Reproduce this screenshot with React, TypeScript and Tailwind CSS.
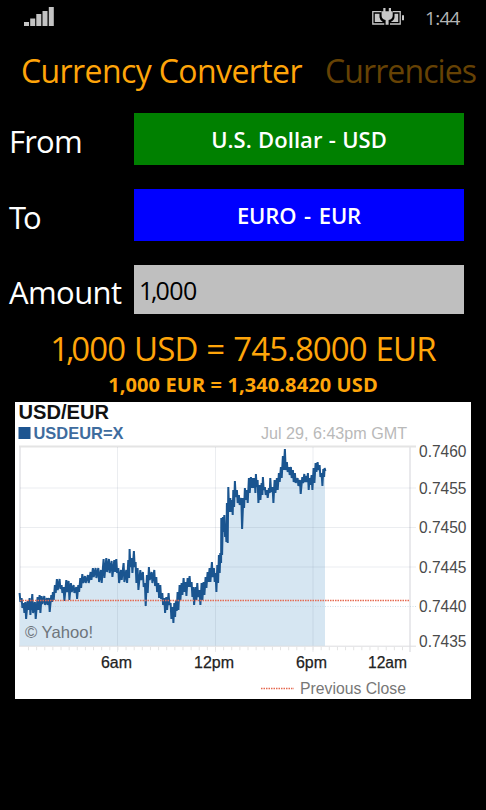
const UI_FONT = "font-['Open_Sans','Noto_Sans',sans-serif]";

// each sample is [x, high, low]
const SERIES: number[][] = [
  [20, 593, 602], [22, 598, 608], [24, 603, 613], [25.7, 602, 619], [28, 601, 610], [30, 598, 615],
  [32.7, 594, 613], [35.3, 602, 619], [38, 597, 610], [40, 595, 613], [42, 596, 604], [44.7, 596, 605],
  [47.3, 598, 605], [49.3, 598, 612], [51.7, 595, 602], [53.3, 592, 600], [55.3, 585, 593], [57.3, 579, 590],
  [60, 579, 589], [62, 585, 593], [64, 587, 601], [66.7, 580, 592], [69, 581, 600], [71.3, 583, 592],
  [74, 585, 593], [76.7, 587, 599], [78.7, 585, 592], [80.7, 578, 588], [82.7, 574, 583], [85.3, 576, 583],
  [88.3, 575, 583], [91, 572, 580], [93.3, 568, 577], [96, 568, 578], [98.7, 568, 582], [101.3, 570, 583],
  [104, 559, 578], [106.7, 558, 572], [109.3, 559, 573], [112, 561, 577], [114.7, 560, 572], [116.7, 559, 573],
  [118.7, 568, 583], [121.3, 570, 580], [124, 563, 582], [126.7, 570, 583], [128.7, 560, 578], [130, 549, 567],
  [132, 558, 573], [134.3, 551, 567], [136, 562, 583], [138, 568, 590], [140.7, 570, 580], [143.3, 572, 587],
  [145.3, 583, 606], [147.3, 575, 593], [149.3, 567, 580], [152, 572, 583], [154.7, 570, 586], [156.7, 577, 592],
  [158.7, 583, 598], [160.7, 585, 599], [162.7, 593, 605], [164.7, 598, 613], [166.7, 597, 610], [169, 593, 605],
  [171, 603, 619], [173, 607, 623], [174.7, 603, 617], [176.3, 600, 611], [178, 592, 610], [180, 585, 600],
  [182, 583, 595], [184, 578, 592], [186, 582, 596], [188, 578, 587], [190, 576, 587], [192, 582, 597],
  [193.7, 587, 605], [196, 587, 600], [197.7, 583, 597], [200, 590, 605], [202, 583, 600], [204, 582, 595],
  [206, 577, 588], [208, 572, 582], [210, 568, 582], [212.3, 562, 577], [214.3, 568, 582], [216, 573, 592],
  [217.7, 565, 583], [219.3, 555, 573], [220.7, 553, 563], [221.7, 518, 555], [223.3, 517, 532], [224.7, 515, 537],
  [226, 525, 542], [227.3, 503, 543], [228.7, 487, 512], [230.7, 498, 512], [232.3, 500, 515], [233.7, 490, 507],
  [235.3, 481, 497], [237.3, 490, 503], [239.3, 495, 505], [241.7, 498, 529], [243.7, 498, 508], [245.3, 488, 500],
  [247.3, 490, 503], [249.3, 478, 493], [251.3, 477, 488], [253.3, 478, 488], [255, 478, 493], [256.3, 474, 487],
  [258, 480, 503], [260, 485, 500], [262, 483, 495], [263.3, 477, 490], [265.3, 487, 495], [267.3, 490, 498],
  [269.3, 488, 493], [270.7, 478, 492], [273, 487, 503], [275, 480, 493], [277.3, 478, 490], [279.3, 473, 482],
  [281.3, 467, 478], [283.3, 456, 470], [285.3, 449, 470], [287.3, 462, 472], [289.3, 467, 475], [291.3, 467, 478],
  [293.3, 470, 482], [295.3, 473, 483], [298, 478, 486], [300.3, 480, 494], [302.7, 477, 483], [304.7, 474, 482],
  [306.7, 476, 482], [308.3, 473, 490], [310, 478, 485], [312, 475, 490], [314, 468, 483], [316, 463, 472],
  [318, 462, 470], [320, 465, 477], [322, 473, 486], [323.7, 469, 477], [325, 468, 471],
];

const LINE = SERIES.map(([x, hi, lo], i) => `${i ? "L" : "M"}${x - 0.4} ${hi}L${x + 0.4} ${lo}`).join("");
const AREA = `M20 646${SERIES.map(([x, hi, lo]) => `L${x} ${(hi + lo) / 2}`).join("")}V646Z`;

const RATES = [
  { label: "0.7460", line: 447, y: 457 },
  { label: "0.7455", line: 488, y: 493.5 },
  { label: "0.7450", line: 527.5, y: 533 },
  { label: "0.7445", line: 567, y: 572.5 },
  { label: "0.7440", line: 606.5, y: 612 },
  { label: "0.7435", line: 646, y: 647 },
];

const HOURS = [
  { label: "6am", x: 101, w: 31 },
  { label: "12pm", x: 194, w: 40 },
  { label: "6pm", x: 296, w: 31 },
  { label: "12am", x: 368, w: 39 },
];

function Signal() {
  return (
    <svg width="30" height="20" viewBox="0 0 30 20" fill="#c4c4c4">
      <path d="M0 15h5v4H0zM6.2 11.5h5V19h-5zM12.3 7h5v12h-5zM18.5 4h5v15h-5zM24.8 0h5v19h-5z" />
    </svg>
  );
}

function Battery() {
  return (
    <svg width="33" height="19" viewBox="0 0 33 19">
      <path d="M9.500 4.700H.8v12.300h11.500M18 17h10.200V4.700h-7.200" fill="none" stroke="#c8c8c8" strokeWidth="1.300" />
      <path d="M2.800 6.800H7.500v3.500q.3 3 3.400 4.700H2.800zM22.500 6.800h3.700V15h-7.500q3.500-1.500 3.800-4.700zM30 8.300h2v5h-2z" fill="#c8c8c8" />
      <path d="M11.300 1h2.200v3.300h3.300V1H19v3.300h1.700v4.500q0 3.500-4.100 4.200v4.800h-3V13q-4-.7-4-4.200V4.300h1.700z" fill="#c8c8c8" />
    </svg>
  );
}

function RateChart() {
  return (
    <svg className="block" width="456" height="297" viewBox="15 402 456 297" fontFamily="Liberation Sans, Arial, sans-serif">
      <rect x="15" y="402" width="456" height="297" fill="#fff" />
      <text x="18.500" y="418.700" fontSize="19.500" fontWeight="700" fill="#111" textLength="90.500" lengthAdjust="spacingAndGlyphs">USD/EUR</text>
      <rect x="18.500" y="427" width="12" height="12" fill="#1c5490" />
      <text x="33.500" y="438.700" fontSize="17" fontWeight="700" fill="#3e6c9e" textLength="90" lengthAdjust="spacingAndGlyphs">USDEUR=X</text>
      <text x="261" y="438.700" fontSize="17" fill="#b9b9b9" textLength="146" lengthAdjust="spacingAndGlyphs">Jul 29, 6:43pm GMT</text>

      <path d="M20 446V646M410 446V652" stroke="#e2e2e6" strokeWidth="1.500" />
      <path d="M19 446.500H416" stroke="#e4e4e4" strokeWidth="1.800" />
      <path d={AREA} fill="#d6e6f2" />
      <path d="M117.500 447V652M215.500 447V652M313 447V652" stroke="#63738c" strokeOpacity=".13" />
      {RATES.slice(1, 4).map((r) => (
        <path key={r.label} d={`M20 ${r.line}H416`} stroke="#63738c" strokeOpacity=".13" />
      ))}
      <path d="M20 606.500H416" stroke="#b9d0dc" strokeOpacity=".7" strokeDasharray="1 1.500" />
      <path d="M19 646.200H416" stroke="#dcdcdf" />
      <path d="M28 648.500H410" stroke="#e4e4e4" strokeWidth="3.500" strokeDasharray="1 7.130" />
      <path d={LINE} fill="none" stroke="#1a5590" strokeWidth="2" strokeLinejoin="bevel" />
      <path d="M20 600.500H410" stroke="#e5684f" strokeWidth="1.300" strokeDasharray="1.500 1" />

      {RATES.map((r) => (
        <text key={r.label} x="419" y={r.y} fontSize="16.500" fill="#4a4a4a" textLength="47.500" lengthAdjust="spacingAndGlyphs">{r.label}</text>
      ))}
      {HOURS.map((h) => (
        <text key={h.label} x={h.x} y="668" fontSize="16" fill="#222" stroke="#222" strokeWidth=".25" textLength={h.w} lengthAdjust="spacingAndGlyphs">{h.label}</text>
      ))}
      <text x="25" y="637.500" fontSize="16.500" fill="#6e757b" textLength="68" lengthAdjust="spacingAndGlyphs">© Yahoo!</text>
      <path d="M261 688.500H294" stroke="#e5684f" strokeWidth="1.300" strokeDasharray="1.500 1" />
      <text x="300" y="694" fontSize="16.500" fill="#777" textLength="106" lengthAdjust="spacingAndGlyphs">Previous Close</text>
    </svg>
  );
}

export default function App() {
  return (
    <div className={`w-[486px] h-[810px] overflow-hidden bg-black text-white whitespace-nowrap ${UI_FONT}`}>
      <div className="flex h-9 items-start pt-[7px] pl-6 pr-[25px]">
        <Signal />
        <div className="ml-auto flex">
          <Battery />
          <span className="ml-5 w-9 text-[19px] leading-[22px] tracking-[-0.7px] text-[#b4b4b4]">1:44</span>
        </div>
      </div>

      <div className="flex h-[77px] items-start pt-3 pl-[21px] text-[32px] leading-[46px] text-[#ffa50a]">
        <h1 className="w-[304px] tracking-[-0.6px]">Currency Converter</h1>
        <span className="tracking-[-0.9px] text-[#664204]">Currencies</span>
      </div>

      <div className="flex flex-col gap-6 pl-[9px] pr-[22px]">
        <div className="flex h-[52px] items-center">
          <label className="w-[125px] pt-1 text-[31px] leading-none tracking-[-0.8px]">From</label>
          <button className="h-full flex-1 bg-[#008000] text-[22px] font-semibold tracking-[0.05px] [word-spacing:0.5px]">U.S. Dollar - USD</button>
        </div>
        <div className="flex h-[52px] items-center">
          <label className="w-[125px] pt-1 text-[31px] leading-none tracking-[-3px]">To</label>
          <button className="h-full flex-1 bg-[#0000ff] text-[22px] font-semibold tracking-[-0.1px] [word-spacing:2px]">EURO - EUR</button>
        </div>
        <div className="flex h-[49px] items-center">
          <label className="w-[125px] pt-1.5 text-[31px] leading-none tracking-[-0.6px]">Amount</label>
          <div className="flex h-full flex-1 items-center bg-[#bfbfbf] pl-[5px] pt-[3px] text-[25px] tracking-[-0.5px] text-black">
            <span className="tracking-[-2.2px]">1,</span>000
          </div>
        </div>
      </div>

      <div className="h-[88px] pt-[13px] text-center text-[#ffa50a]">
        <p className="text-[33px] leading-[44px] tracking-[-0.9px] [word-spacing:1.2px]">
          <span className="tracking-[-3.2px]">1,</span>000 USD = 745.8000 EUR
        </p>
        <p className="pt-px text-[20px] leading-[26px] font-bold tracking-[0.1px]">1,000 EUR = 1,340.8420 USD</p>
      </div>
      <div className="pl-[15px]">
        <RateChart />
      </div>
    </div>
  );
}
